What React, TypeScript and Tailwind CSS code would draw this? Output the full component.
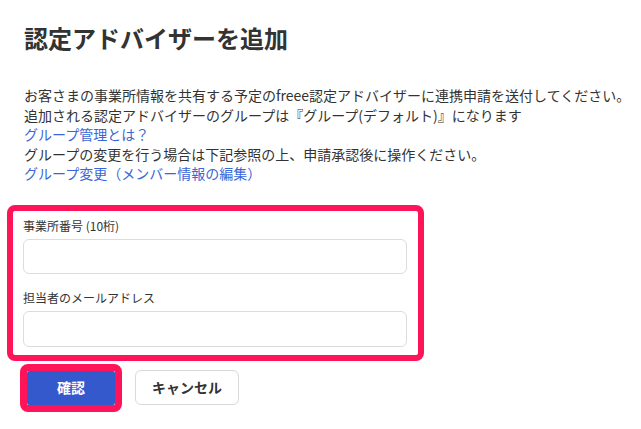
import * as React from "react"

export default function App() {
  return (
    <div
      className="min-h-screen bg-white text-[#333333]"
      style={{ fontFamily: '"Noto Sans CJK JP", "Noto Sans", sans-serif' }}
    >
      <div className="pt-[22px]">
        <h1 className="pl-[24px] text-[24px] leading-[32px] font-bold text-[#333333]">
          認定アドバイザーを追加
        </h1>

        <div className="mt-[32px] pl-[24px] text-[14px] leading-[19.5px] whitespace-nowrap">
          <p>お客さまの事業所情報を共有する予定のfreee認定アドバイザーに連携申請を送付してください。</p>
          <p>追加される認定アドバイザーのグループは『グループ(デフォルト)』になります</p>
          <p>
            <a href="#" className="text-[#3b66d8]">グループ管理とは？</a>
          </p>
          <p>グループの変更を行う場合は下記参照の上、申請承認後に操作ください。</p>
          <p>
            <a href="#" className="text-[#3b66d8]">グループ変更（メンバー情報の編集）</a>
          </p>
        </div>

        <form className="mt-[21px]">
          <div className="ml-[7px] w-[417px] rounded-[8px] border-[6px] border-[#ff1459] pl-[10px] pr-[11px] pt-[6px] pb-[8px]">
            <div className="flex flex-col gap-[15px]">
              <label className="flex flex-col gap-[4px]">
                <span className="text-[12px] leading-[18px]">事業所番号 (10桁)</span>
                <input
                  type="text"
                  className="h-[35px] w-full rounded-[6px] border border-[#dcdcdc] bg-white px-2 text-[14px] outline-none"
                />
              </label>
              <label className="flex flex-col gap-[4px]">
                <span className="text-[12px] leading-[18px]">担当者のメールアドレス</span>
                <input
                  type="email"
                  className="h-[36px] w-full rounded-[6px] border border-[#dcdcdc] bg-white px-2 text-[14px] outline-none"
                />
              </label>
            </div>
          </div>

          <div className="mt-[3px] ml-[20px] flex items-center gap-[13px]">
            <div className="rounded-[8px] border-[7px] border-[#ff1459]">
              <button
                type="button"
                className="flex h-[34px] w-[88px] items-center justify-center rounded-[2px] bg-[#3459cc] text-[14px] font-bold text-white"
              >
                確認
              </button>
            </div>
            <button
              type="button"
              className="flex h-[35px] w-[104px] items-center justify-center rounded-[6px] border border-[#d9d9d9] bg-white text-[14px] font-bold text-[#333333]"
            >
              キャンセル
            </button>
          </div>
        </form>
      </div>
    </div>
  )
}
